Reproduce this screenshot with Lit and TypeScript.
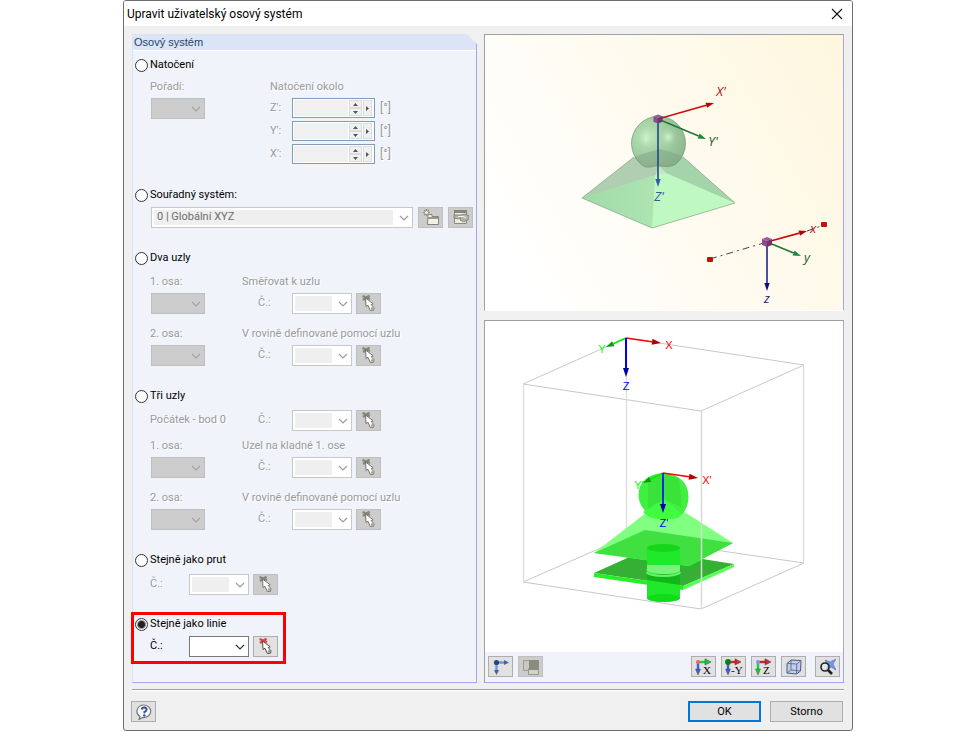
import { LitElement, html, svg, css } from "lit";
import { customElement, property } from "lit/decorators.js";

const chevron = html`<svg class="chev" viewBox="0 0 10 6" aria-hidden="true"><path d="M1 1 L5 5 L9 1" fill="none" stroke="currentColor" stroke-width="1.1"/></svg>`;

const arrow = (x1: number, y1: number, x2: number, y2: number, color: string, head: string, size = 9, w = 1.6) => {
  const l = Math.hypot(x2 - x1, y2 - y1);
  const ux = (x2 - x1) / l;
  const uy = (y2 - y1) / l;
  const bx = x2 - ux * size;
  const by = y2 - uy * size;
  const h = size / 3;
  return svg`<line x1=${x1} y1=${y1} x2=${bx} y2=${by} stroke=${color} stroke-width=${w}/>
    <polygon fill=${head} points="${x2},${y2} ${bx - uy * h},${by + ux * h} ${bx + uy * h},${by - ux * h}"/>`;
};

const cube = (x: number, y: number, s: number) => svg`
  <polygon fill="#9a5a9e" points="${x},${y - s} ${x + s},${y - s * 0.6} ${x},${y - s * 0.2} ${x - s},${y - s * 0.6}"/>
  <polygon fill="#8a4a8c" points="${x - s},${y - s * 0.6} ${x},${y - s * 0.2} ${x},${y + s} ${x - s},${y + s * 0.6}"/>
  <polygon fill="#6c3570" points="${x + s},${y - s * 0.6} ${x},${y - s * 0.2} ${x},${y + s} ${x + s},${y + s * 0.6}"/>`;

const pickIcon = (active: boolean) => html`<svg class="icon" viewBox="0 0 16 16" aria-hidden="true">
  <path d="M1.500 1 L9 4 M2 5 L8.500 .5" stroke=${active ? "#dd4444" : "#85857a"} stroke-width="2.2" fill="none"/>
  <path d="M4.500 3 L5 11.500 L7 10.300 L9.300 15.500 L12.500 15.200 L13 12.800 L10.200 9.600 L12.200 8.800 Z" fill="#fff" stroke=${active ? "#4c4c4c" : "#74746c"} stroke-width="1"/>
  <path d="M9.700 12.500 L12.300 12 L12 14.500 L10 14.800 Z" fill=${active ? "#999" : "#a8a8a0"}/>
</svg>`;

const axisIcon = (letter: string, h: string, v: string, dot: string) => html`<svg class="icon wide" viewBox="0 0 20 18" aria-hidden="true">
  <path d="M4 4 H12" stroke=${h} stroke-width="2.4"/><path d="M11 .8 L17 4 L11 7 Z" fill=${h} stroke="#3c3c3c" stroke-width=".5"/>
  <path d="M4 4 V13" stroke=${v} stroke-width="2.4"/><path d="M1.500 11 L4 17 L6.500 11 Z" fill=${v} stroke="#3c3c3c" stroke-width=".4"/>
  <circle cx="4" cy="4" r=${letter.length > 1 ? 3 : 2} fill=${dot}/>
  <text x=${letter.length > 1 ? 7 : 9} y="16" class="axis">${letter}</text>
</svg>`;

@customElement("app-root")
export class AppRoot extends LitElement {
  @property() mode = "line";

  static styles = css`
    :host { display: block; background: #fff; font: 11px/18px Roboto, "DejaVu Sans Condensed", sans-serif; color: #000; }
    * { box-sizing: border-box; }
    .dialog { max-width: 730px; margin: 0 auto; border: 1px solid #6e6e6e; border-radius: 3px; background: #f0f0f0; overflow: hidden; }
    .title { display: flex; justify-content: space-between; align-items: center; height: 25px; background: #fff; padding: 0 8px 0 3px; }
    h1 { margin: 0; font: 12px/18px Roboto, "Open Sans", sans-serif; }
    .close { width: 14px; height: 14px; padding: 0; border: 0; background: none; display: flex; align-items: center; justify-content: center; }
    .close svg { width: 12px; height: 12px; }
    .body { display: grid; grid-template-columns: 345fr 360fr; gap: 7px; padding: 8px 8px 6px; }
    .panel { background: #f0f4fa; border: 1px solid #a6a6ec; border-left-color: #d6e3f8; border-top: 0; min-width: 0; padding: 0 3px 12px 2px; clip-path: polygon(-4px 0, calc(100% - 10px) 0, 100% 10px, 100% 100%, -4px 100%); }
    .panel h2 { margin: 0 -3px 5px -2px; padding-left: 1px; height: 17px; background: #dbe5f5; border-bottom: 1px solid #fff; font: 11px/16px "Liberation Sans", Arial, sans-serif; color: #1f4569; }
    .group { margin-bottom: 21px; }
    .group.last { margin-bottom: 17px; }
    .marked { border: 3px solid #f00; width: 155px; margin: 0 0 0 -4px; padding: 0 0 4px 1px; }
    .radio { display: flex; align-items: center; gap: 2px; height: 18px; }
    .radio input { appearance: none; width: 13px; height: 13px; margin: 0; border: 1px solid #333; border-radius: 50%; background: #fff; }
    .radio input:checked { background: radial-gradient(circle, #222 0 3px, #fff 5px); }
    .fields { display: grid; grid-template-columns: 92px 50px 1fr; row-gap: 1px; padding-left: 15px; align-items: center; }
    .top2 { margin-top: 2px; }
    .top4 { margin-top: 4px; }
    .top6 { margin-top: 6px; }
    .top11 { margin-top: 11px; }
    .short { grid-template-columns: 39px 1fr; }
    .caption { grid-column: 2 / 4; }
    .caption.in { padding-left: 28px; }
    .off { color: #9a9a9a; text-shadow: 1px 1px 0 #fff; white-space: nowrap; }
    .nr { padding-left: 16px; }
    .axisname { padding-left: 28px; }
    .short .nr { padding-left: 0; }
    .row { display: flex; align-items: center; gap: 4px; height: 22px; grid-column: 3; }
    .short .row { grid-column: 2; }
    .row.sys { grid-column: 1 / 4; gap: 5px; padding-left: 1px; }
    .sel { position: relative; display: block; height: 21px; width: 60px; color: #9a9a9a; }
    .sel select { appearance: none; width: 100%; height: 100%; margin: 0; border: 1px solid #c8c8c8; padding: 0 20px 0 5px; font: inherit; border-radius: 0; opacity: 1; color: #6d6d6d; background: linear-gradient(#efefef, #efefef) 2px 2px / calc(100% - 21px) 15px no-repeat #fff; }
    .sel.active { color: #333; }
    .sel.active select { border-color: #7a7a7a; background: #fff; color: #000; }
    .sel.gray { width: 54px; margin-left: 1px; color: #a4a4a4; }
    .sel.gray select { background: #ccc; border-color: #bfbfbf; }
    .sel.long { width: 263px; flex: 0 1 auto; }
    .chev { position: absolute; right: 4px; top: 8px; width: 10px; height: 6px; pointer-events: none; }
    .spin { display: flex; width: 83px; height: 20px; border: 1px solid #7f9db9; background: #fff; padding: 1px 2px 1px 1px; gap: 1px; }
    .spin input { flex: 1; min-width: 0; border: 0; padding: 0; background: #f0f0f0; }
    .steps { display: grid; grid-template-rows: 1fr 1fr; width: 13px; }
    .spin button { padding: 0; border: 1px solid #dcdcdc; background: #f0f0f0; display: flex; align-items: center; justify-content: center; min-height: 0; }
    .spin svg { width: 5px; height: 5px; flex: none; }
    .side { width: 9px; }
    .unit { padding-left: 1px; font-size: 12px; }
    .tool { width: 25px; height: 21px; padding: 0; border: 1px solid #adadad; background: #e1e1e1; display: flex; align-items: center; justify-content: center; flex: none; }
    .tool[disabled] { background: #ccc; border-color: #bfbfbf; }
    .icon { width: 16px; height: 16px; display: block; }
    .icon.wide { width: 20px; height: 18px; }
    .axis { font: 11px "Liberation Serif", serif; }
    .views { display: flex; flex-direction: column; gap: 9px; min-width: 0; }
    .view { border: 1px solid #a6a6ec; border-left-color: #a0a0a0; border-top-color: #a0a0a0; }
    .view svg.scene { display: block; width: 100%; height: auto; }
    .preview { background: linear-gradient(60deg, #fff 10%, #fef6de); border-bottom-color: #fff; }
    .view.model { background: #fff; flex: 1; display: flex; flex-direction: column; justify-content: space-between; }
    .bar { display: flex; gap: 5px; padding: 4px 3px 5px; background: #f0f4fa; }
    .bar .push { margin-left: auto; }
    .bar .apart { margin-left: 4px; }
    .t { font: italic 13px "Open Sans", sans-serif; text-anchor: middle; }
    .l { font: 11px "Liberation Sans", sans-serif; text-anchor: middle; }
    footer { display: flex; align-items: center; gap: 9px; margin: 0 8px; padding: 11px 1px 8px 0; border-top: 1px solid #a0a0a0; box-shadow: inset 0 1px #fff; }
    footer .help { margin-right: auto; margin-left: -1px; }
    .cmd { width: 73px; height: 21px; padding: 0; border: 1px solid #adadad; background: #e1e1e1; font: inherit; color: #000; }
    .cmd.primary { border: 2px solid #0078d7; }
  `;

  private radio(value: string, text: string) {
    return html`<label class="radio"><input type="radio" name="mode" value=${value} .checked=${this.mode === value}
      @change=${() => (this.mode = value)}><span>${text}</span></label>`;
  }

  private combo(label: string, kind = "", text = "") {
    return html`<span class="sel ${kind}"><select aria-label=${label} ?disabled=${kind !== "active"}><option>${text}</option></select>${chevron}</span>`;
  }

  private numberRow(label: string, active = false) {
    return html`<span class="nr ${active ? "" : "off"}">Č.:</span>
      <div class="row">${this.combo(label, active ? "active" : "")}
        <button class="tool" aria-label="Vybrat" ?disabled=${!active}>${pickIcon(active)}</button></div>`;
  }

  private axisBlock(name: string, caption: string, top: string) {
    return html`<div class="fields ${top}"><span class="off">${name}</span><span class="off caption">${caption}</span>
      ${this.combo(name, "gray")}${this.numberRow(caption)}</div>`;
  }

  private spin(name: string, first: boolean) {
    return html`${first ? this.combo("Pořadí", "gray") : html`<span></span>`}
      <label class="off axisname" for=${name}>${name}':</label>
      <div class="row"><span class="spin"><input id=${name} disabled>
        <span class="steps">
          <button disabled aria-label="Více"><svg viewBox="0 0 5 5"><path d="M0 4 L2.500 1 L5 4Z" fill="#555"/></svg></button>
          <button disabled aria-label="Méně"><svg viewBox="0 0 5 5"><path d="M0 1 L2.500 4 L5 1Z" fill="#555"/></svg></button>
        </span>
        <button class="side" disabled aria-label="Další"><svg viewBox="0 0 5 5"><path d="M1 0 L4 2.500 L1 5Z" fill="#555"/></svg></button>
      </span><span class="off unit">[°]</span></div>`;
  }

  private previewScene() {
    return html`<svg class="scene" viewBox="485 35 358 275" role="img" aria-label="Náhled osového systému">
      <defs>
        <radialGradient id="ball" cx=".3" cy=".4" r=".75">
          <stop offset="0" stop-color="#c4ecc4"/><stop offset=".3" stop-color="#a2d3a4"/><stop offset="1" stop-color="#86b289"/>
        </radialGradient>
        <radialGradient id="shine"><stop offset="0" stop-color="#d2f6d2"/><stop offset="1" stop-color="#a5d5a5" stop-opacity="0"/></radialGradient>
        <linearGradient id="leftFace"><stop offset="0" stop-color="#a0dca8"/><stop offset="1" stop-color="#aee4b2"/></linearGradient>
      </defs>
      <polygon points="582,198 634,157 660,149 683,157 735,203 652,228" fill="#b2d9b4"/>
      <polygon points="582,198 634,157 660,149 666,173" fill="#b0ceb2"/>
      <polygon points="735,203 683,157 660,149 666,173" fill="#a5d3aa"/>
      <polygon points="582,198 655,175 652,228" fill="url(#leftFace)"/>
      <polygon points="652,228 655,175 666,173 735,203" fill="#bff8c1"/>
      <path d="M582 198 L634 157 M683 157 L735 203 L652 228 L582 198" fill="none" stroke="#86a889" stroke-width=".7"/>
      <path d="M640 163 A27 27 0 1 1 677 163 Q671 168 662 166 Q655 165 651 167 Q644 168 640 163Z" fill="url(#ball)" stroke="#6f9372" stroke-width=".7" fill-opacity=".92"/>
      <path d="M635 157 Q646 152 660 149 Q673 152 682 156 Q678 166 668 167 L652 166 Q640 168 635 157Z" fill="#7f9f83" opacity=".4"/>
      <ellipse cx="646" cy="138" rx="8" ry="12" fill="url(#shine)"/>
      <ellipse cx="668" cy="137" rx="9" ry="10" fill="url(#shine)"/>
      <polygon points="658,165 666,173 656,175" fill="#d2f2d2" opacity=".7"/>
      ${arrow(658, 119, 714, 103, "#c80f0f", "#b40000", 8)}
      ${arrow(658, 119, 706, 139, "#1f7a38", "#1c8a3a", 8)}
      ${arrow(658, 119, 658, 187, "#1f4a86", "#2f5fa8", 8)}
      ${cube(658, 119, 4.5)}
      <text class="t" x="721" y="96" fill="#b01020">X'</text>
      <text class="t" x="713" y="146" fill="#186030">Y'</text>
      <text class="t" x="659" y="201" fill="#2f5a9c">Z'</text>
      <path d="M710 259 L767 242 M807 231 L824 225" stroke="#444" stroke-width="1" stroke-dasharray="7 4 2 4" fill="none"/>
      ${arrow(767, 242, 807, 231, "#c80f0f", "#b40000", 8)}
      ${arrow(767, 242, 801, 256, "#1f7a38", "#1c8a3a", 8)}
      ${arrow(767, 242, 767, 291, "#22228a", "#101070", 8)}
      <rect x="707" y="257" width="6" height="5" rx="1" fill="#c01010"/>
      <rect x="821" y="222" width="6" height="5" rx="1" fill="#c01010"/>
      ${cube(767, 242, 5)}
      <text class="t" x="813" y="233" fill="#b01020">x</text>
      <text class="t" x="807" y="262" fill="#186030">y</text>
      <text class="t" x="767" y="303" fill="#151570">z</text>
    </svg>`;
  }

  private modelScene() {
    return html`<svg class="scene" viewBox="485 321 358 331" role="img" aria-label="Model">
      <path d="M626 338 L523 384 L701 411 L804 365 Z M523 582 L701 609 L804 563 L626 537 Z" fill="none" stroke="#c8c8c8" stroke-width="1"/>
      <path d="M626.500 338 V537 M523.500 384 V582 M803.500 365 V563" stroke="#dcdcdc" stroke-width="1.3"/>
      <polygon points="594,573 645,550 734,564 683,586" fill="#35b035"/>
      <polygon points="626,558 645,550 706,560 689,567" fill="#0fce12"/>
      <polygon points="594,573 683,586 683,590 594,577" fill="#28ee28"/>
      <polygon points="683,586 734,564 734,567 683,590" fill="#55ff55"/>
      <polygon points="664,499 594,553 689,566 733,543" fill="#80ff80"/>
      <polygon points="594,553 645,530 733,543 689,566" fill="#40e040"/>
      <path d="M647 549 V598 A16.500 4 0 0 0 680 598 V549Z" fill="#20e82a"/>
      <path d="M647 574 H680 V585 L647 580Z" fill="#12b61a"/>
      <path d="M647 565 L680 565 V571 A16.500 4 0 0 1 647 569Z" fill="#78f278"/>
      <ellipse cx="663.500" cy="548" rx="16.500" ry="4" fill="#16d61b"/>
      <ellipse cx="663.500" cy="598" rx="16.500" ry="4" fill="#10dc18"/>
      <path d="M647 572 A16.500 4 0 0 0 680 572" fill="none" stroke="#68f268" stroke-width="2"/>
      <path d="M650 515 Q638 506 638.500 494 Q640 475 663 473 Q688 475 688.500 497 Q688 512 677 518 Q670 520 665 517 Q656 521 650 515Z" fill="#40f040"/>
      <path d="M648 478 Q663 471 679 478 L682 508 L664 499 L648 510Z" fill="#38e038" opacity=".8"/>
      <path d="M664 499 L643 512 Q650 520 664 519 Q674 521 682 514Z" fill="#40fb40"/>
      <path d="M701.500 411 V609" stroke="#d4dcd4" stroke-width="1.5"/>
      ${arrow(626, 338, 606, 347, "#0e0", "#0a9a0a", 8, 1.6)}
      ${arrow(626, 338, 661, 343, "#f00", "#b00000", 9, 1.6)}
      ${arrow(626, 338, 626, 377, "#00f", "#0000a8", 9, 2)}
      <text class="l" x="602" y="353" fill="#0f0">Y</text>
      <text class="l" x="669" y="349" fill="#f00">X</text>
      <text class="l" x="626" y="390" fill="#00f">Z</text>
      ${arrow(663, 473, 643, 483, "#0e0", "#0a9a0a", 8, 1.6)}
      ${arrow(663, 473, 698, 478, "#f00", "#b00000", 9, 1.6)}
      ${arrow(663, 473, 663, 513, "#0030e0", "#0000a8", 9, 2)}
      <text class="l" x="639" y="489" fill="#0f0">Y'</text>
      <text class="l" x="707" y="484" fill="#f00">X'</text>
      <text class="l" x="664" y="527" fill="#00f">Z'</text>
    </svg>`;
  }

  render() {
    return html`<main class="dialog">
      <header class="title"><h1>Upravit uživatelský osový systém</h1>
        <button class="close" aria-label="Zavřít"><svg viewBox="0 0 12 12"><path d="M1 1 L11 11 M11 1 L1 11" stroke="#111" stroke-width="1.1"/></svg></button>
      </header>
      <div class="body">
        <section class="panel">
          <h2>Osový systém</h2>
          <div class="group">${this.radio("rotation", "Natočení")}
            <div class="fields top4"><span class="off">Pořadí:</span><span class="off caption in">Natočení okolo</span>
              ${this.spin("Z", true)}${this.spin("Y", false)}${this.spin("X", false)}</div>
          </div>
          <div class="group">${this.radio("system", "Souřadný systém:")}
            <div class="fields top2"><div class="row sys">${this.combo("Souřadný systém", "long", "0 | Globální XYZ")}
              <button class="tool" disabled aria-label="Nový"><svg class="icon" viewBox="0 0 16 16"><path d="M5 5.500 h4 v2 h6.500 v8 h-11z" fill="#f1f1e8" stroke="#858578"/><path d="M5 8h10v2H5z" fill="#9a9a8c"/><path d="M3.500 0 V7 M0 3.500 H7 M1 1 L6 6 M6 1 L1 6" stroke="#8e8e84" stroke-width="1.2"/><circle cx="3.500" cy="3.500" r="1.500" fill="#eee"/></svg></button>
              <button class="tool" disabled aria-label="Upravit"><svg class="icon" viewBox="0 0 16 16"><path d="M1.500 1.500 h12 v13 h-12z" fill="#ecece2" stroke="#8a8a7e"/><path d="M1 1h13v3H1z" fill="#858579"/><path d="M1 6 h6 l5-1 4 2 v3 l-5 3 -4-2 1-2 -3 1 -4-1z" fill="#b4b4a8" stroke="#6f6f66" stroke-width=".7"/><path d="M5 7.500 h5 l3 1" stroke="#f5f5ee" fill="none"/></svg></button>
            </div></div>
          </div>
          <div class="group">${this.radio("two", "Dva uzly")}
            ${this.axisBlock("1. osa:", "Směřovat k uzlu", "top6")}
            ${this.axisBlock("2. osa:", "V rovině definované pomocí uzlu", "top11")}
          </div>
          <div class="group">${this.radio("three", "Tři uzly")}
            <div class="fields top4"><span class="off">Počátek - bod 0</span>${this.numberRow("Počátek")}</div>
            ${this.axisBlock("1. osa:", "Uzel na kladné 1. ose", "top6")}
            ${this.axisBlock("2. osa:", "V rovině definované pomocí uzlu", "top11")}
          </div>
          <div class="group last">${this.radio("member", "Stejně jako prut")}
            <div class="fields short top4">${this.numberRow("Číslo prutu")}</div>
          </div>
          <div class="marked">${this.radio("line", "Stejně jako linie")}
            <div class="fields short top2">${this.numberRow("Číslo linie", true)}</div>
          </div>
        </section>
        <div class="views">
          <section class="view preview">${this.previewScene()}</section>
          <section class="view model">${this.modelScene()}
            <div class="bar">
              <button class="tool" aria-label="Osy"><svg class="icon" viewBox="0 0 16 16"><path d="M3 3.500 H12 M3.500 3 V12" stroke="#6f98e0" stroke-width="2.400"/><path d="M11 1 L16 3.500 L11 6Z M1 11 L3.500 16 L6 11Z" fill="#466596"/><circle cx="3.500" cy="3.500" r="2.600" fill="#2c4676"/></svg></button>
              <button class="tool" disabled aria-label="Vrstvy"><svg class="icon" viewBox="0 0 16 16"><path d="M.5 1.500h8v10h-8z" fill="#c9c9bf" stroke="#99998e"/><path d="M5.500 9.500h10v6h-10z" fill="#d3d3c9" stroke="#99998e"/><path d="M6 1h10v10H6z" fill="#8b8b80"/></svg></button>
              <button class="tool push" aria-label="Pohled X">${axisIcon("X", "#16cf3c", "#3b5fe0", "#ff5a5a")}</button>
              <button class="tool" aria-label="Pohled -Y">${axisIcon("-Y", "#e0202c", "#3b5fe0", "#0b7f1a")}</button>
              <button class="tool" aria-label="Pohled Z">${axisIcon("Z", "#d8202c", "#16cf3c", "#8090ff")}</button>
              <button class="tool" aria-label="Izometrie"><svg class="icon" viewBox="0 0 16 16"><path d="M1 4.500 L5 1 L15 1.500 L14.500 12 L10.500 15 L1 14Z" fill="#c3cfe6" stroke="#4a5a80"/><path d="M1 4.500 L10.800 5 L15 1.500 M10.800 5 L10.500 15 M5 1 L5 11 L14.500 12 M5 11 L1 14" fill="none" stroke="#5a6b94" stroke-width=".9"/></svg></button>
              <button class="tool apart" aria-label="Přiblížit vše"><svg class="icon" viewBox="0 0 16 16"><path d="M5 1 L10 3 L16 0 L13 5 L16 11 L11 8 L6 11 L8 6Z" fill="#6f9ae6" stroke="#4a6fb8" stroke-width=".6"/><circle cx="5" cy="8" r="4" fill="#e6eef8" fill-opacity=".6" stroke="#222" stroke-width="1.600"/><path d="M8 11 L12 15" stroke="#222" stroke-width="2.600"/></svg></button>
            </div>
          </section>
        </div>
      </div>
      <footer>
        <button class="tool help" aria-label="Nápověda"><svg class="icon" viewBox="0 0 16 16"><path d="M8 1 A7 6.300 0 1 1 6.500 13.500 L3 15.500 L4 12.500 A7 6.300 0 0 1 8 1Z" fill="#f4f6fa" stroke="#777" stroke-width="1.200"/><path d="M5.700 5.500 Q6 3.500 8.300 3.500 Q10.800 3.600 10.600 5.800 Q10.200 7.300 8.400 8 V9.300" fill="none" stroke="#3a4f94" stroke-width="1.900"/><circle cx="8.300" cy="11.500" r="1.200" fill="#3a4f94"/></svg></button>
        <button class="cmd primary">OK</button><button class="cmd">Storno</button>
      </footer>
    </main>`;
  }
}
